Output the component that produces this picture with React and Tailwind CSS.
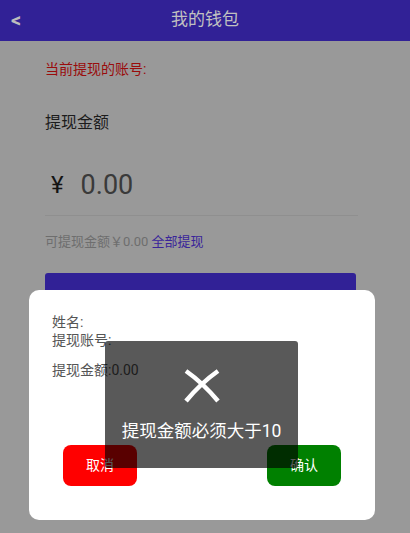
import React from 'react';

const font = { fontFamily: 'Roboto, "Noto Sans CJK SC", sans-serif' };

const XMark = () => (
  <svg width="38" height="38" viewBox="0 0 38 38" fill="none">
    <path d="M3 4 Q 20 16 35 34" stroke="#fff" strokeWidth="4.5" strokeLinecap="butt" />
    <path d="M35 4 Q 18 16 3 34" stroke="#fff" strokeWidth="4.5" strokeLinecap="butt" />
  </svg>
);

const App = () => {
  return (
    <div className="relative w-[410px] h-[533px] overflow-hidden bg-[#999999]" style={font}>
      {/* header */}
      <div className="h-[41px] bg-[#312196] flex items-center relative">
        <span className="absolute left-[11px] top-[5px] text-[20px] font-bold text-[#bdbdbd]">&lt;</span>
        <div className="w-full text-center text-[17px] text-[#c0c0c0] pb-[2px]">我的钱包</div>
      </div>

      {/* page */}
      <div className="ml-[45px] w-[313px] flex flex-col">
        <div className="mt-[19px] text-[14px] leading-[18px] text-[#9a0c0c]">当前提现的账号:</div>
        <div className="mt-[35px] text-[16px] leading-[20px] text-[#1c1c1c]">提现金额</div>
        <div className="mt-[32px] flex items-center h-[40px] pl-[6px]">
          <span className="text-[24px] text-[#141414]">¥</span>
          <span className="ml-[17px] text-[27px] text-[#3a3a3a]">0.00</span>
        </div>
        <div className="mt-[10px] h-px bg-[#8f8f8f]" />
        <div className="mt-[18px] text-[13px] leading-[16px] text-[#6e6e6e]">
          可提现金额￥0.00 <span className="text-[#3a259a]">全部提现</span>
        </div>
        <div className="mt-[23px] w-[311px] h-[40px] rounded-[3px] bg-[#312196]" />
      </div>

      {/* dialog */}
      <div className="absolute left-[29px] top-[290px] w-[346px] h-[230px] bg-white rounded-[10px] px-[23px] pt-[23px]">
        <div className="text-[14px] leading-[18px] text-[#555555]">
          <div>姓名:</div>
          <div>提现账号:</div>
          <div className="mt-[12px]">提现金额:0.00</div>
        </div>
        <div className="mt-[66px] flex justify-between px-[11px]">
          <div className="w-[74px] h-[41px] rounded-[8px] bg-[#ff0000] text-white text-[14px] flex items-center justify-center">取消</div>
          <div className="w-[74px] h-[41px] rounded-[8px] bg-[#008000] text-white text-[14px] flex items-center justify-center">确认</div>
        </div>
      </div>

      {/* toast */}
      <div className="absolute left-[105px] top-[341px] w-[193px] h-[127px] rounded-[3px] bg-black/65 flex flex-col items-center">
        <div className="mt-[26px]">
          <XMark />
        </div>
        <div className="mt-[15px] text-[17.5px] leading-[22px] text-white whitespace-nowrap">提现金额必须大于10</div>
      </div>
    </div>
  );
};

export default App;
